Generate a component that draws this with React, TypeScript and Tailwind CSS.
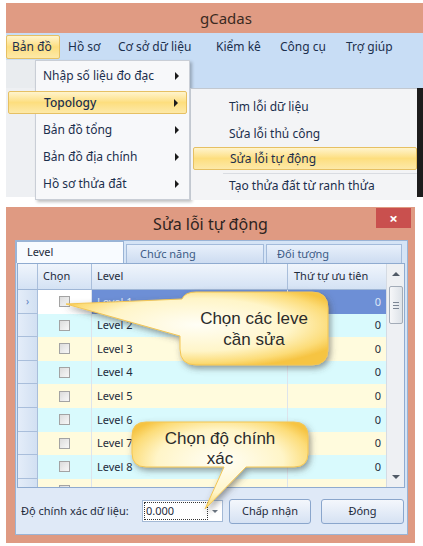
import React from "react";

const levels = [1, 2, 3, 4, 5, 6, 7, 8, 9];

function RightArrow() {
  return <span className="inline-block w-0 h-0 border-y-[4px] border-y-transparent border-l-[4px] border-l-[#1b1b1b]" />;
}

function Checkbox() {
  return (
    <span className="block w-[11px] h-[11px] border border-[#a3a3a3] bg-gradient-to-br from-[#dcdcdc] to-[#f7f7f7] p-[2px]">
      <span className="block w-full h-full bg-gradient-to-br from-[#e2e2e2] to-[#f2f2f2]" />
    </span>
  );
}

const hl = "bg-gradient-to-b from-[#fff4cc] via-[#fdde7e] to-[#fde9a8] border border-[#e6c063] rounded-[2px]";

export default function App() {
  return (
    <div className="w-[423px] h-[546px] bg-white relative overflow-hidden font-['Noto_Sans',sans-serif]">
      {/* gCadas main window, menu open */}
      <div className="relative h-[200px] pl-[6px] pt-[3px]">
        <div className="h-[30px] bg-[#e09b83] text-[15px] text-[#3b2a22] pl-[194px] leading-[30px]">gCadas</div>
        <div className="bg-[#c8ddf5]">
          <div className="h-[27px] flex items-center text-[12px] text-[#1b2f4d]">
            <span className={`w-[54px] h-[24px] flex items-center pl-[5px] ${hl}`}>Bản đồ</span>
            <span className="ml-[8px] w-[50px]">Hồ sơ</span>
            <span className="w-[98px]">Cơ sở dữ liệu</span>
            <span className="w-[64px]">Kiểm kê</span>
            <span className="w-[66px]">Công cụ</span>
            <span>Trợ giúp</span>
          </div>
          <div className="h-[28px] flex">
            <div className="w-[29px] bg-[#e9ecef]" />
          </div>
        </div>
        <div className="h-[109px] flex">
          <div className="w-[29px] bg-[#eef0f3]" />
          <div className="flex-1 bg-[#f4f5f7]" />
          <div className="w-[6px] bg-[#1c1c1c]" />
        </div>

        {/* dropdown */}
        <div className="absolute left-[35px] top-[60px] w-[155px] h-[140px] bg-[#f7f8fa] border border-[#c9ced6] shadow-[2px_2px_3px_rgba(0,0,0,0.25)] text-[12px] text-[#1b2f4d] pt-[1px]">
          <div className="h-[27px] flex items-center justify-between pl-[7px] pr-[10px]">
            <span>Nhập số liệu đo đạc</span>
            <RightArrow />
          </div>
          <div className={`h-[23px] my-[2px] -ml-[28px] mr-[2px] flex items-center justify-between pl-[35px] pr-[8px] font-medium ${hl}`}>
            <span>Topology</span>
            <RightArrow />
          </div>
          <div className="h-[27px] flex items-center justify-between pl-[7px] pr-[10px]">
            <span>Bản đồ tổng</span>
            <RightArrow />
          </div>
          <div className="h-[27px] flex items-center justify-between pl-[7px] pr-[10px]">
            <span>Bản đồ địa chính</span>
            <RightArrow />
          </div>
          <div className="h-[27px] flex items-center justify-between pl-[7px] pr-[10px]">
            <span>Hồ sơ thửa đất</span>
            <RightArrow />
          </div>
        </div>

        {/* submenu */}
        <div className="absolute left-[190px] top-[88px] w-[227px] h-[112px] bg-[#f3f4f6] border-l border-t border-[#c2c8d0] text-[12px] text-[#1b2f4d] pt-[5px]">
          <div className="h-[26px] flex items-center pl-[38px]">Tìm lỗi dữ liệu</div>
          <div className="h-[27px] flex items-center pl-[38px]">Sửa lỗi thủ công</div>
          <div className={`h-[23px] ml-[2px] flex items-center pl-[36px] ${hl}`}>Sửa lỗi tự động</div>
          <div className="h-px bg-[#d9dce1] ml-[32px] mt-[3px]" />
          <div className="h-[24px] flex items-center pl-[38px]">Tạo thửa đất từ ranh thửa</div>
        </div>
      </div>

      {/* Dialog */}
      <div className="mt-[7px] ml-[6px] w-[409px] h-[336px] bg-[#df9a82] pl-[9px] pr-[7px] pb-[8px] flex flex-col">
        <div className="relative h-[33px] flex items-center justify-center text-[16px] text-[#2e2320] -ml-[9px] -mr-[7px]">
          Sửa lỗi tự động
          <div className="absolute right-[4px] top-[1px] w-[35px] h-[20px] bg-[#c9504e] flex items-center justify-center text-white text-[15px] font-bold leading-none">×</div>
        </div>

        <div className="flex-1 bg-[#d5e4f6] border border-[#9ab4d6] flex flex-col">
          {/* tabs */}
          <div className="h-[22px] flex items-end text-[11px]">
            <div className="w-[108px] h-[22px] bg-[#f8fbff] border border-b-0 border-[#9ab4d6] flex items-center pl-[10px] text-[#1e2b3c]">Level</div>
            <div className="ml-[2px] w-[138px] h-[19px] bg-gradient-to-b from-[#e8f0fb] to-[#cddcf1] border border-b-0 border-[#a3bbdb] flex items-center pl-[13px] text-[#3c5b85]">Chức năng</div>
            <div className="ml-[2px] w-[136px] h-[19px] bg-gradient-to-b from-[#e8f0fb] to-[#cddcf1] border border-b-0 border-[#a3bbdb] flex items-center pl-[10px] text-[#3c5b85]">Đối tượng</div>
          </div>

          {/* grid */}
          <div className="ml-[1px] w-[388px] h-[225px] border border-[#8fabd0] bg-white flex overflow-hidden text-[11px] text-[#1e2b3c]">
            <div className="w-[368px] flex flex-col">
              <div className="h-[26px] shrink-0 flex bg-gradient-to-b from-[#f0f5fc] to-[#d4e2f4] border-b border-[#9fb6d6]">
                <div className="w-[20px] border-r border-[#a9bedb]" />
                <div className="w-[54px] border-r border-[#a9bedb] flex items-center pl-[5px]">Chọn</div>
                <div className="w-[196px] border-r border-[#a9bedb] flex items-center pl-[5px]">Level</div>
                <div className="flex-1 flex items-center pl-[6px]">Thứ tự ưu tiên</div>
              </div>
              {levels.map((n) => {
                const sel = n === 1;
                const last = n === 9;
                const bg = n % 2 === 0 ? "bg-[#d9fafd]" : "bg-[#fffbdd]";
                return (
                  <div key={n} className="h-[23.6px] shrink-0 flex">
                    <div className="w-[20px] bg-gradient-to-r from-[#e4edf9] to-[#d2e0f2] border-r border-b border-[#a9bedb] flex items-center justify-center text-[#5a7fbf] text-[10px]">
                      {sel ? "›" : ""}
                    </div>
                    <div className={`w-[54px] flex items-center justify-center border-r border-[#dde4ec] ${sel ? "bg-white" : bg}`}>
                      <Checkbox />
                    </div>
                    <div className={`w-[196px] flex items-center pl-[5px] border-r border-[#dde4ec] ${sel ? "bg-[#6d8fd6] text-[#dfe7f7]" : bg}`}>
                      {last ? "" : `Level ${n}`}
                    </div>
                    <div className={`flex-1 flex items-center justify-end pr-[5px] ${sel ? "bg-[#6d8fd6] text-[#dfe7f7]" : bg}`}>{last ? "" : "0"}</div>
                  </div>
                );
              })}
            </div>
            {/* scrollbar */}
            <div className="flex-1 bg-[#eef0f3] border-l border-[#d5dbe3] flex flex-col items-center">
              <div className="h-[20px] flex items-center justify-center">
                <span className="w-0 h-0 border-x-[4px] border-x-transparent border-b-[4px] border-b-[#505a66]" />
              </div>
              <div className="w-[14px] h-[38px] mt-[2px] bg-gradient-to-r from-[#f6f7f9] to-[#dde2e8] border border-[#a3acb8] rounded-[2px] flex flex-col items-center justify-center gap-[2px]">
                <span className="w-[6px] h-px bg-[#7c8694]" />
                <span className="w-[6px] h-px bg-[#7c8694]" />
                <span className="w-[6px] h-px bg-[#7c8694]" />
              </div>
              <div className="flex-1" />
              <div className="h-[20px] flex items-center justify-center">
                <span className="w-0 h-0 border-x-[4px] border-x-transparent border-t-[4px] border-t-[#505a66]" />
              </div>
            </div>
          </div>

          {/* bottom */}
          <div className="flex-1 flex items-center bg-[#dfe9f7] text-[11px] text-[#1e2b3c]">
            <span className="w-[126px] pl-[5px]">Độ chính xác dữ liệu:</span>
            <div className="w-[81px] h-[22px] bg-white border border-[#a3b9d6] flex items-center">
              <div className="flex-1 h-[18px] ml-[1px] border border-dotted border-[#333] flex items-center pl-[1px]">0.000</div>
              <div className="w-[14px] flex items-center justify-center">
                <span className="w-0 h-0 border-x-[3px] border-x-transparent border-t-[3px] border-t-[#6a7480]" />
              </div>
            </div>
            <div className="ml-[6px] w-[82px] h-[25px] bg-gradient-to-b from-[#f4f7fc] to-[#d6e2f3] border border-[#8aa6cc] rounded-[3px] flex items-center justify-center">Chấp nhận</div>
            <div className="ml-[10px] w-[83px] h-[25px] bg-gradient-to-b from-[#f4f7fc] to-[#d6e2f3] border border-[#8aa6cc] rounded-[3px] flex items-center justify-center">Đóng</div>
          </div>
        </div>
      </div>

      {/* callouts */}
      <svg className="absolute inset-0 pointer-events-none" width="423" height="546">
        <defs>
          <radialGradient id="bub" cx="50%" cy="45%" r="60%">
            <stop offset="0%" stopColor="#fffef6" />
            <stop offset="60%" stopColor="#fff5c8" />
            <stop offset="86%" stopColor="#fcdc78" />
            <stop offset="100%" stopColor="#f6c443" />
          </radialGradient>
          <filter id="sh" x="-20%" y="-20%" width="140%" height="150%">
            <feDropShadow dx="2" dy="3" stdDeviation="3" floodColor="#4a4a4a" floodOpacity="0.55" />
          </filter>
        </defs>
        <path
          d="M196,292 H312 Q328,292 328,308 V349 Q328,365 312,365 H196 Q180,365 180,349 V336 L66,304 L182,299 Q185,292 196,292 Z"
          fill="url(#bub)"
          stroke="#f3c655"
          strokeWidth="1"
          filter="url(#sh)"
        />
        <path
          d="M146,422 H294 Q308,422 308,436 V453 Q308,467 294,467 H246 L205,509 L224,467 H146 Q132,467 132,453 V436 Q132,422 146,422 Z"
          fill="url(#bub)"
          stroke="#f3c655"
          strokeWidth="1"
          filter="url(#sh)"
        />
      </svg>
      <div className="absolute left-[180px] top-[292px] w-[148px] h-[73px] flex flex-col items-center justify-center text-[17px] leading-[21px] text-[#2b2b2b] font-['Liberation_Sans',sans-serif]">
        <span>Chọn các leve</span>
        <span>cần sửa</span>
      </div>
      <div className="absolute left-[132px] top-[422px] w-[176px] h-[45px] pt-[8px] flex flex-col items-center justify-center text-[17px] leading-[20px] text-[#2b2b2b] font-['Liberation_Sans',sans-serif]">
        <span>Chọn độ chính</span>
        <span>xác</span>
      </div>
    </div>
  );
}
